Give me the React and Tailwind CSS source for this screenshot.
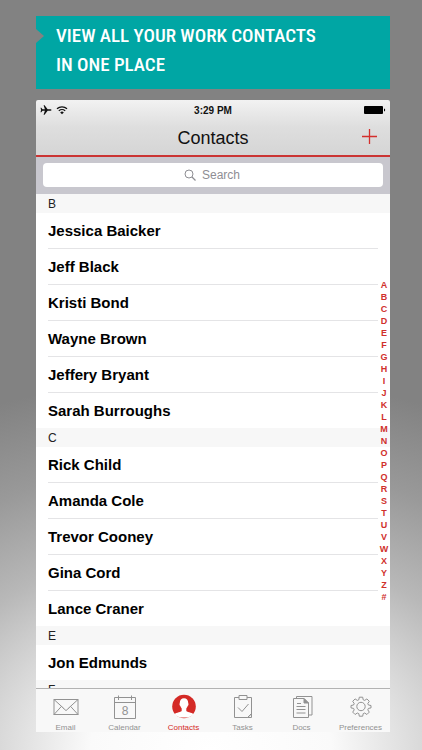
const SECTIONS = [
  {
    letter: 'B',
    names: ['Jessica Baicker', 'Jeff Black', 'Kristi Bond', 'Wayne Brown', 'Jeffery Bryant', 'Sarah Burroughs'],
  },
  {
    letter: 'C',
    names: ['Rick Child', 'Amanda Cole', 'Trevor Cooney', 'Gina Cord', 'Lance Craner'],
  },
  { letter: 'E', names: ['Jon Edmunds'] },
  { letter: 'F', names: [] },
]

const INDEX = 'ABCDEFGHIJKLMNOPQRSTUVWXYZ#'.split('')

function EmailIcon() {
  return (
    <svg width="26" height="26" viewBox="0 0 26 26" fill="none" stroke="currentColor">
      <rect x="1" y="5.5" width="24" height="15" />
      <path d="M1 5.5l9.5 8.7M25 5.5l-9.5 8.7M1 20.5l7.5-8.2M25 20.5l-7.5-8.2M9.5 13.4l3.5 3.2 3.5-3.2" />
    </svg>
  )
}

function CalendarIcon() {
  return (
    <svg width="26" height="26" viewBox="0 0 26 26" fill="none" stroke="currentColor">
      <path d="M2.5 3.5h21v21h-21zM2.5 8.5h21M6.5 1.5v4.5M19.5 1.5v4.5" />
      <text x="13" y="21" fontSize="12" textAnchor="middle" fill="currentColor" stroke="none">8</text>
    </svg>
  )
}

function ContactsIcon() {
  return (
    <svg width="26" height="26" viewBox="0 0 26 26">
      <circle cx="13" cy="12.5" r="11.8" fill="currentColor" />
      <path
        d="M13 4.200c-2.600 0-4.200 1.700-4.200 4.600 0 .6-.4.900-.3 1.600.1.800.6 1.100.8 1.700.3 1 .8 1.800 1.400 2.400v2.300c0 .7-1.200 1-2.900 1.500-1.900.5-3.400 1-4.200 1.900A11 11 0 0 0 13 23.500a11 11 0 0 0 9.400-3.300c-.8-.9-2.300-1.400-4.200-1.900-1.700-.5-2.900-.8-2.900-1.500v-2.300c.6-.6 1.100-1.400 1.400-2.400.2-.6.700-.9.800-1.700.1-.7-.3-1-.3-1.600 0-2.900-1.600-4.600-4.200-4.600z"
        fill="#fff"
      />
    </svg>
  )
}

function TasksIcon() {
  return (
    <svg width="26" height="26" viewBox="0 0 26 26" fill="none" stroke="currentColor">
      <path d="M9 3.500H4.500v20h13l4-3.500V3.500H17" />
      <path d="M9 1.500h8v4H9zM17.500 23.500h4v-4zM8 13.500l4 4 6.500-7.500" />
    </svg>
  )
}

function DocsIcon() {
  return (
    <svg width="26" height="26" viewBox="0 0 26 26" fill="none" stroke="currentColor">
      <path d="M4.500 4.500h10.500l4.500 4.500v14.500h-15z" />
      <path d="M7.500 4.500v-2h15.500v18.500h-3.500" />
      <path d="M15 4.500v4.500h4.500z" fill="currentColor" />
      <path d="M8 9.500h4M7.500 12.500h9M7.500 15.500h9M7.500 19h9" />
    </svg>
  )
}

function PreferencesIcon() {
  return (
    <svg width="26" height="26" viewBox="0 0 26 26" fill="none" stroke="currentColor" strokeLinejoin="round">
      <circle cx="13" cy="12.500" r="4.200" />
      <path d="M11.300 3.200h3.400l.5 2.600 1.500.6 2.200-1.500 2.400 2.400-1.500 2.200.6 1.500 2.600.5v2.400l-2.600.5-.6 1.500 1.500 2.200-2.400 2.400-2.200-1.500-1.500.6-.5 2.600h-3.400l-.5-2.600-1.500-.6-2.200 1.500-2.400-2.400 1.500-2.200-.6-1.500-2.600-.5v-2.400l2.600-.5.6-1.500-1.500-2.200 2.400-2.400 2.200 1.500 1.500-.6z" />
    </svg>
  )
}

const TABS = [
  { label: 'Email', Icon: EmailIcon },
  { label: 'Calendar', Icon: CalendarIcon },
  { label: 'Contacts', Icon: ContactsIcon, active: true },
  { label: 'Tasks', Icon: TasksIcon },
  { label: 'Docs', Icon: DocsIcon },
  { label: 'Preferences', Icon: PreferencesIcon },
]

function Banner() {
  return (
    <div className="relative bg-[#00a6a4] pl-5 pt-[5px] pb-2.5 text-white">
      {/* Notch on the left edge */}
      <svg className="absolute left-0 top-3" width="8" height="16" viewBox="0 0 8 16">
        <path d="M0 1l8 7-8 7z" fill="#828282" />
      </svg>
      <h1 className="font-['Roboto_Condensed','Liberation_Sans_Narrow','Open_Sans',sans-serif] text-[19px] leading-[29px] font-medium">
        VIEW ALL YOUR WORK CONTACTS
        <br />
        IN ONE PLACE
      </h1>
    </div>
  )
}

function StatusBar() {
  return (
    <div className="grid grid-cols-3 items-center px-1 h-5">
      <div className="flex items-center gap-1">
        <svg width="12" height="12" viewBox="0 0 12 12" fill="#111">
          <path d="M11.600 6c0-.5-.8-.8-1.500-.8H7.600L4.600 1.300h-1l1.300 3.900H2.500L1.300 3.700H.5L1.100 6 .5 8.300h.8l1.200-1.500h2.400l-1.300 3.900h1l3-3.900h2.500c.7 0 1.500-.3 1.500-.8z" />
        </svg>
        <svg width="12" height="12" viewBox="0 0 12 12" fill="none" stroke="#111" strokeWidth="1.300">
          <path d="M1 4.800a7.200 7.200 0 0 1 10 0M2.800 6.900a4.600 4.600 0 0 1 6.400 0" />
          <path d="M6 10.300L4.200 8.500a2.500 2.500 0 0 1 3.600 0z" fill="#111" stroke="none" />
        </svg>
      </div>
      <span className="text-center text-[10px] font-bold text-[#111]">3:29 PM</span>
      <svg className="justify-self-end" width="22" height="10" viewBox="0 0 22 10">
        <rect x="0" y="1" width="19" height="8" rx="1" />
        <path d="M20 3.500c.8.300 1.200.8 1.200 1.500s-.4 1.200-1.200 1.500z" />
      </svg>
    </div>
  )
}

function ContactList() {
  return (
    <main className="relative h-[494px] overflow-hidden bg-white">
      {SECTIONS.map(({ letter, names }) => (
        <section key={letter}>
          <h3 className="h-[19px] bg-[#f7f7f7] pl-3 text-xs leading-5 font-medium text-[#222]">{letter}</h3>
          <ul className="px-3">
            {names.map((name) => (
              <li
                key={name}
                className="border-b border-[#e4e4e6] pt-px text-[15px] leading-[34px] font-bold text-black last:border-b-0"
              >
                {name}
              </li>
            ))}
          </ul>
        </section>
      ))}

      {/* Alphabet jump index */}
      <nav className="absolute inset-y-0 right-0 flex w-3 flex-col items-center justify-center text-[9px] leading-3 font-bold text-[#d0302c]">
        {INDEX.map((c) => (
          <a key={c} href={`#${c}`}>{c}</a>
        ))}
      </nav>
    </main>
  )
}

function TabBar() {
  return (
    <nav className="grid grid-cols-6 border-t border-[#b2b2b2] bg-[#f8f8f8] pt-[5px]">
      {TABS.map(({ label, Icon, active }) => (
        <button
          key={label}
          className={`flex flex-col items-center ${active ? 'text-[#d42a26]' : 'text-[#929292]'}`}
        >
          <Icon />
          <span className="mt-1 text-[8px] leading-2">{label}</span>
        </button>
      ))}
    </nav>
  )
}

export default function App() {
  return (
    <div className="min-h-screen bg-[#828282] bg-[radial-gradient(ellipse_130%_50%_at_50%_100%,#ffffff_0%,#fafafa_22%,#dadada_38%,#b8b8b8_55%,#999999_77%,#828282_100%)] pt-4 pr-8 pb-4 pl-9 font-['Liberation_Sans',Arial,sans-serif]">
      <Banner />

      <div className="mt-[11px] overflow-hidden rounded-t-xs">
        <header className="border-b-2 border-[#cb3433] bg-linear-to-b from-[#f2f2f2] via-[#dedede] to-[#d5d5d5]">
          <StatusBar />
          <div className="grid grid-cols-[1fr_auto_1fr] items-center h-[35px] px-3">
            <h2 className="col-start-2 text-lg leading-8 text-[#111]">Contacts</h2>
            <button aria-label="Add contact" className="justify-self-end pb-0.5">
              <svg width="17" height="17" viewBox="0 0 17 17" stroke="#d42f2c" strokeWidth="1.300">
                <path d="M8.500 1v15M1 8.500h15" />
              </svg>
            </button>
          </div>
        </header>

        <div className="bg-[#c8c7ce] px-[7px] pt-1.5 pb-[7px]">
          <label className="flex h-6 items-center justify-center gap-1.5 rounded bg-white text-[#8e8e93]">
            <svg width="12" height="12" viewBox="0 0 12 12" fill="none" stroke="currentColor">
              <circle cx="5" cy="5" r="4" />
              <path d="M8 8l3.500 3.500" strokeWidth="1.200" />
            </svg>
            <input
              type="text"
              aria-label="Search"
              placeholder="Search"
              className="w-10 text-xs outline-none placeholder:text-[#8e8e93]"
            />
          </label>
        </div>

        <ContactList />
        <TabBar />
      </div>
    </div>
  )
}
